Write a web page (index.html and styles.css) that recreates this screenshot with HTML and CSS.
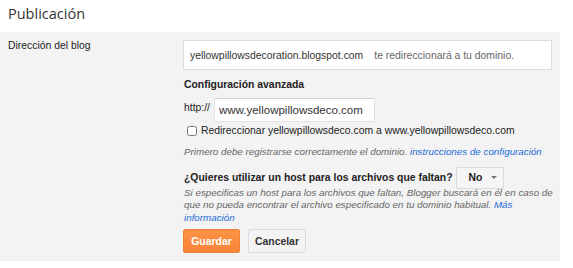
FILE: index.html
```html
<!DOCTYPE html>
<html lang="es">
<head>
  <meta charset="UTF-8" />
  <title>Publicación</title>
  <link rel="stylesheet" href="styles.css">
</head>
<body>
  <h2 class="page-title">Publicación</h2>

  <div class="panel">
    <div class="label">Dirección del blog</div>

    <div class="content">
      <div class="domain-box">
        <span class="domain">yellowpillowsdecoration.blogspot.com</span>
        <span class="redirect-note">te redireccionará a tu dominio.</span>
      </div>

      <div class="section-title">Configuración avanzada</div>

      <div class="url-row">
        <span class="prefix">http://</span>
        <input class="url-input" type="text" value="www.yellowpillowsdeco.com">
      </div>

      <label class="check-row">
        <input type="checkbox">
        <span>Redireccionar yellowpillowsdeco.com a www.yellowpillowsdeco.com</span>
      </label>

      <div class="hint">Primero debe registrarse correctamente el dominio. <a href="#">instrucciones de configuración</a></div>

      <div class="host-row">
        <span class="question">¿Quieres utilizar un host para los archivos que faltan?</span>
        <button class="select-btn">No <span class="caret"></span></button>
      </div>

      <div class="hint para">Si especificas un host para los archivos que faltan, Blogger buscará en él en caso de que no pueda encontrar el archivo especificado en tu dominio habitual. <a href="#">Más información</a></div>

      <div class="actions">
        <button class="btn primary">Guardar</button>
        <button class="btn">Cancelar</button>
      </div>
    </div>
  </div>
</body>
</html>
```

FILE: styles.css
```css
html, body {
  margin: 0;
  padding: 0;
  background: #ffffff;
  font-family: "Liberation Sans", Arial, sans-serif;
  font-size: 10.4px;
  color: #222;
}

.page-title {
  margin: 0;
  height: 32px;
  line-height: 28px;
  padding-left: 8px;
  font-family: "Open Sans", sans-serif;
  font-weight: normal;
  font-size: 14.5px;
  color: #333;
}

.panel {
  width: 560px;
  background: #f3f3f3;
  display: grid;
  grid-template-columns: 183px 1fr;
  padding: 8px 0 8px 0;
  box-sizing: border-box;
}

.label {
  padding-left: 8px;
  line-height: 12px;
  color: #222;
}

.content {
  padding-right: 8px;
}

.domain-box {
  height: 30px;
  box-sizing: border-box;
  border: 1px solid #dcdcdc;
  background: #fff;
  display: flex;
  align-items: center;
  padding-left: 6px;
}

.domain {
  color: #333;
}

.redirect-note {
  color: #666;
  margin-left: 11px;
}

.section-title {
  font-weight: bold;
  color: #222;
  margin: 9px 0 0 1px;
  line-height: 12px;
}

.url-row {
  display: flex;
  align-items: center;
  margin-top: 7px;
  padding-left: 1px;
}

.prefix {
  color: #222;
  margin-right: 4px;
  align-self: flex-start;
  margin-top: 4px;
}

.url-input {
  width: 161px;
  height: 24px;
  box-sizing: border-box;
  border: 1px solid #e2e2e2;
  border-top-color: #d0d0d0;
  background: #fff;
  font-family: "Liberation Sans", Arial, sans-serif;
  font-size: 11.5px;
  color: #333;
  padding: 0 4px;
  margin: 0;
  outline: none;
}

.check-row {
  display: flex;
  align-items: center;
  margin-top: 3px;
  padding-left: 4px;
  line-height: 12px;
  color: #222;
}

.check-row input {
  margin: 0 4px 0 0;
  width: 10px;
  height: 10px;
}

.hint {
  font-style: italic;
  font-size: 9.8px;
  color: #666;
  margin-top: 9px;
  padding-left: 1px;
  line-height: 12.5px;
  white-space: nowrap;
}

.hint a {
  color: #1a6bd6;
  text-decoration: none;
}

.host-row {
  display: flex;
  align-items: center;
  margin-top: 8px;
  padding-left: 1px;
}

.question {
  font-weight: bold;
  color: #222;
}

.select-btn {
  margin-left: 4px;
  width: 48px;
  height: 22px;
  border: 1px solid #dcdcdc;
  border-radius: 2px;
  background: #f5f5f5;
  font-family: "Liberation Sans", Arial, sans-serif;
  font-size: 10.4px;
  font-weight: bold;
  color: #222;
  text-align: left;
  padding: 0 0 0 11px;
  display: flex;
  align-items: center;
}

.caret {
  width: 0;
  height: 0;
  margin-left: 9px;
  border-style: solid;
  border-width: 3px 3px 0 3px;
  border-color: #777 transparent transparent transparent;
}

.hint.para {
  margin-top: -2px;
  margin-right: -8px;
  white-space: normal;
}

.actions {
  display: flex;
  gap: 8px;
  margin-top: 5px;
}

.btn {
  height: 24px;
  width: 58px;
  border: 1px solid #dcdcdc;
  border-radius: 2px;
  background: #f3f3f3;
  font-family: "Liberation Sans", Arial, sans-serif;
  font-size: 10.4px;
  font-weight: bold;
  color: #333;
  padding: 0;
}

.btn.primary {
  width: 57px;
  background: linear-gradient(#fd9245, #f9843a);
  border-color: #f08138;
  color: #fff;
}
```
